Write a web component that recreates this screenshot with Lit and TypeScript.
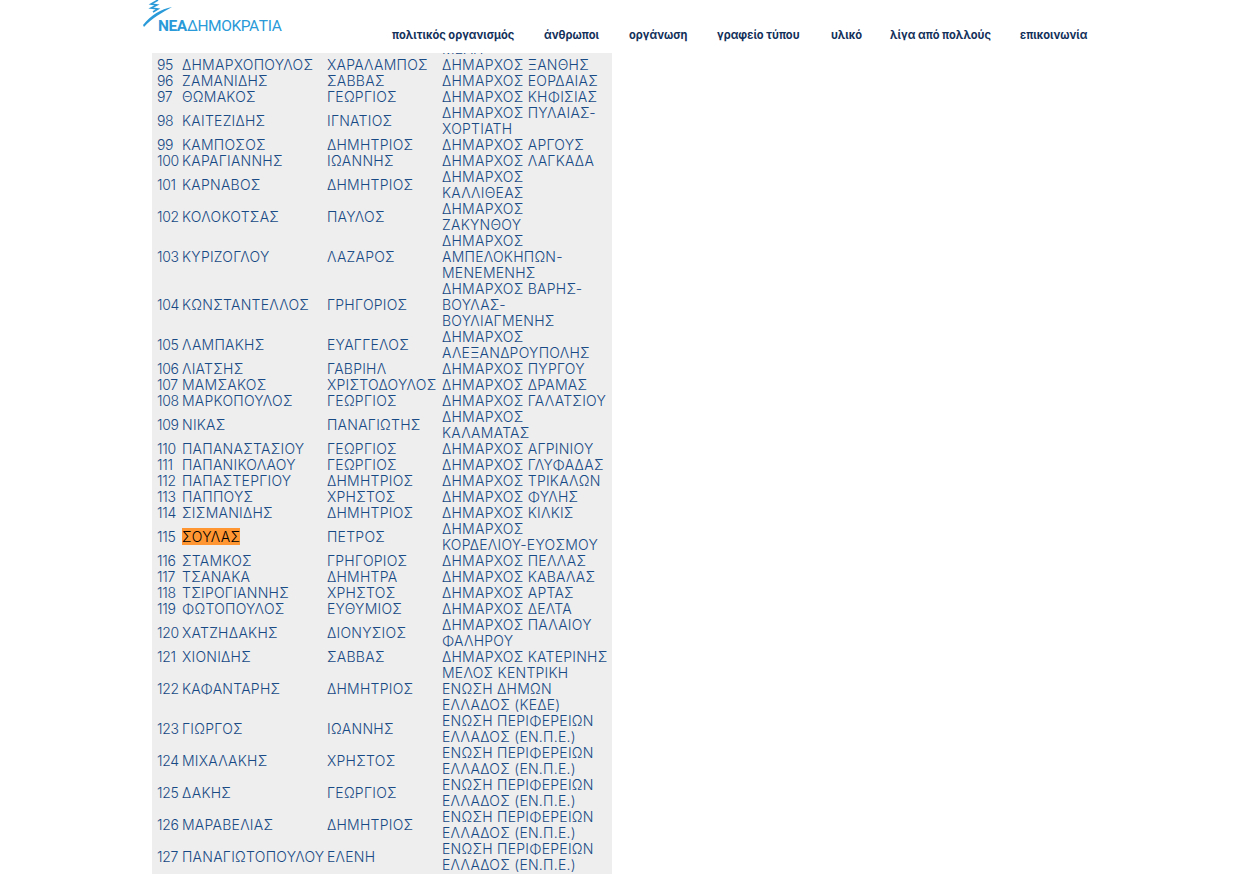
import { LitElement, html, css, svg } from "lit";
import { customElement } from "lit/decorators.js";

const rows: [string, string, string, string][] = [
  ["", "", "", "ΜΕΛΗ"],
  ["95", "ΔΗΜΑΡΧΟΠΟΥΛΟΣ", "ΧΑΡΑΛΑΜΠΟΣ", "ΔΗΜΑΡΧΟΣ ΞΑΝΘΗΣ"],
  ["96", "ΖΑΜΑΝΙΔΗΣ", "ΣΑΒΒΑΣ", "ΔΗΜΑΡΧΟΣ ΕΟΡΔΑΙΑΣ"],
  ["97", "ΘΩΜΑΚΟΣ", "ΓΕΩΡΓΙΟΣ", "ΔΗΜΑΡΧΟΣ ΚΗΦΙΣΙΑΣ"],
  ["98", "ΚΑΙΤΕΖΙΔΗΣ", "ΙΓΝΑΤΙΟΣ", "ΔΗΜΑΡΧΟΣ ΠΥΛΑΙΑΣ-\nΧΟΡΤΙΑΤΗ"],
  ["99", "ΚΑΜΠΟΣΟΣ", "ΔΗΜΗΤΡΙΟΣ", "ΔΗΜΑΡΧΟΣ ΑΡΓΟΥΣ"],
  ["100", "ΚΑΡΑΓΙΑΝΝΗΣ", "ΙΩΑΝΝΗΣ", "ΔΗΜΑΡΧΟΣ ΛΑΓΚΑΔΑ"],
  ["101", "ΚΑΡΝΑΒΟΣ", "ΔΗΜΗΤΡΙΟΣ", "ΔΗΜΑΡΧΟΣ\nΚΑΛΛΙΘΕΑΣ"],
  ["102", "ΚΟΛΟΚΟΤΣΑΣ", "ΠΑΥΛΟΣ", "ΔΗΜΑΡΧΟΣ\nΖΑΚΥΝΘΟΥ"],
  ["103", "ΚΥΡΙΖΟΓΛΟΥ", "ΛΑΖΑΡΟΣ", "ΔΗΜΑΡΧΟΣ\nΑΜΠΕΛΟΚΗΠΩΝ-\nΜΕΝΕΜΕΝΗΣ"],
  ["104", "ΚΩΝΣΤΑΝΤΕΛΛΟΣ", "ΓΡΗΓΟΡΙΟΣ", "ΔΗΜΑΡΧΟΣ ΒΑΡΗΣ-\nΒΟΥΛΑΣ-\nΒΟΥΛΙΑΓΜΕΝΗΣ"],
  ["105", "ΛΑΜΠΑΚΗΣ", "ΕΥΑΓΓΕΛΟΣ", "ΔΗΜΑΡΧΟΣ\nΑΛΕΞΑΝΔΡΟΥΠΟΛΗΣ"],
  ["106", "ΛΙΑΤΣΗΣ", "ΓΑΒΡΙΗΛ", "ΔΗΜΑΡΧΟΣ ΠΥΡΓΟΥ"],
  ["107", "ΜΑΜΣΑΚΟΣ", "ΧΡΙΣΤΟΔΟΥΛΟΣ", "ΔΗΜΑΡΧΟΣ ΔΡΑΜΑΣ"],
  ["108", "ΜΑΡΚΟΠΟΥΛΟΣ", "ΓΕΩΡΓΙΟΣ", "ΔΗΜΑΡΧΟΣ ΓΑΛΑΤΣΙΟΥ"],
  ["109", "ΝΙΚΑΣ", "ΠΑΝΑΓΙΩΤΗΣ", "ΔΗΜΑΡΧΟΣ\nΚΑΛΑΜΑΤΑΣ"],
  ["110", "ΠΑΠΑΝΑΣΤΑΣΙΟΥ", "ΓΕΩΡΓΙΟΣ", "ΔΗΜΑΡΧΟΣ ΑΓΡΙΝΙΟΥ"],
  ["111", "ΠΑΠΑΝΙΚΟΛΑΟΥ", "ΓΕΩΡΓΙΟΣ", "ΔΗΜΑΡΧΟΣ ΓΛΥΦΑΔΑΣ"],
  ["112", "ΠΑΠΑΣΤΕΡΓΙΟΥ", "ΔΗΜΗΤΡΙΟΣ", "ΔΗΜΑΡΧΟΣ ΤΡΙΚΑΛΩΝ"],
  ["113", "ΠΑΠΠΟΥΣ", "ΧΡΗΣΤΟΣ", "ΔΗΜΑΡΧΟΣ ΦΥΛΗΣ"],
  ["114", "ΣΙΣΜΑΝΙΔΗΣ", "ΔΗΜΗΤΡΙΟΣ", "ΔΗΜΑΡΧΟΣ ΚΙΛΚΙΣ"],
  ["115", "ΣΟΥΛΑΣ", "ΠΕΤΡΟΣ", "ΔΗΜΑΡΧΟΣ\nΚΟΡΔΕΛΙΟΥ-ΕΥΟΣΜΟΥ"],
  ["116", "ΣΤΑΜΚΟΣ", "ΓΡΗΓΟΡΙΟΣ", "ΔΗΜΑΡΧΟΣ ΠΕΛΛΑΣ"],
  ["117", "ΤΣΑΝΑΚΑ", "ΔΗΜΗΤΡΑ", "ΔΗΜΑΡΧΟΣ ΚΑΒΑΛΑΣ"],
  ["118", "ΤΣΙΡΟΓΙΑΝΝΗΣ", "ΧΡΗΣΤΟΣ", "ΔΗΜΑΡΧΟΣ ΑΡΤΑΣ"],
  ["119", "ΦΩΤΟΠΟΥΛΟΣ", "ΕΥΘΥΜΙΟΣ", "ΔΗΜΑΡΧΟΣ ΔΕΛΤΑ"],
  ["120", "ΧΑΤΖΗΔΑΚΗΣ", "ΔΙΟΝΥΣΙΟΣ", "ΔΗΜΑΡΧΟΣ ΠΑΛΑΙΟΥ\nΦΑΛΗΡΟΥ"],
  ["121", "ΧΙΟΝΙΔΗΣ", "ΣΑΒΒΑΣ", "ΔΗΜΑΡΧΟΣ ΚΑΤΕΡΙΝΗΣ"],
  ["122", "ΚΑΦΑΝΤΑΡΗΣ", "ΔΗΜΗΤΡΙΟΣ", "ΜΕΛΟΣ ΚΕΝΤΡΙΚΗ\nΕΝΩΣΗ ΔΗΜΩΝ\nΕΛΛΑΔΟΣ (ΚΕΔΕ)"],
  ["123", "ΓΙΩΡΓΟΣ", "ΙΩΑΝΝΗΣ", "ΕΝΩΣΗ ΠΕΡΙΦΕΡΕΙΩΝ\nΕΛΛΑΔΟΣ (ΕΝ.Π.Ε.)"],
  ["124", "ΜΙΧΑΛΑΚΗΣ", "ΧΡΗΣΤΟΣ", "ΕΝΩΣΗ ΠΕΡΙΦΕΡΕΙΩΝ\nΕΛΛΑΔΟΣ (ΕΝ.Π.Ε.)"],
  ["125", "ΔΑΚΗΣ", "ΓΕΩΡΓΙΟΣ", "ΕΝΩΣΗ ΠΕΡΙΦΕΡΕΙΩΝ\nΕΛΛΑΔΟΣ (ΕΝ.Π.Ε.)"],
  ["126", "ΜΑΡΑΒΕΛΙΑΣ", "ΔΗΜΗΤΡΙΟΣ", "ΕΝΩΣΗ ΠΕΡΙΦΕΡΕΙΩΝ\nΕΛΛΑΔΟΣ (ΕΝ.Π.Ε.)"],
  ["127", "ΠΑΝΑΓΙΩΤΟΠΟΥΛΟΥ", "ΕΛΕΝΗ", "ΕΝΩΣΗ ΠΕΡΙΦΕΡΕΙΩΝ\nΕΛΛΑΔΟΣ (ΕΝ.Π.Ε.)"],
];

const nav = ["πολιτικός οργανισμός", "άνθρωποι", "οργάνωση", "γραφείο τύπου", "υλικό", "λίγα από πολλούς", "επικοινωνία"];

@customElement("app-root")
export class AppRoot extends LitElement {
  static styles = css`
    :host { display: block; position: relative; height: 874px; overflow: hidden; background: #fff; font-family: "Inter", "Noto Sans", sans-serif; }
    header { position: absolute; left: 0; right: 0; top: 0; height: 53px; display: flex; align-items: flex-start; padding-left: 142px; background: #fff; }
    .logo { width: 140px; height: 35px; display: flex; align-items: flex-end; position: relative; }
    .mark { position: absolute; left: 0; top: 0; }
    .word { margin-left: 16px; font-family: "Roboto", sans-serif; font-size: 15.5px; letter-spacing: -0.4px; line-height: 18px; color: #2a9ad8; white-space: nowrap; }
    .word b { font-weight: 700; }
    nav { display: grid; grid-template-columns: 123px 56px 59px 85px 30px 101px 66px; column-gap: 29px; margin-left: 110px; padding-top: 27px; }
    nav a { font-size: 11.1px; line-height: 16px; font-weight: 700; color: #12305a; white-space: nowrap; }
    main { position: absolute; left: 152px; top: 41px; bottom: 0; width: 460px; background: #eee; }
    table { border-collapse: collapse; table-layout: fixed; width: 460px; font-size: 14px; line-height: 16px; font-weight: 350; letter-spacing: 0.25px; color: #174a85; }
    td { padding: 0; vertical-align: middle; white-space: pre-line; }
    .n { width: 25px; padding-left: 5px; letter-spacing: -0.3px; }
    .s { width: 145px; white-space: nowrap; }
    .f { width: 115px; white-space: nowrap; }
    mark { background: #ff9632; color: #000; }
  `;

  render() {
    return html`
      <main>
        <table>
          ${rows.map((r) => html`<tr>
            <td class="n">${r[0]}</td>
            <td class="s">${r[1] === "ΣΟΥΛΑΣ" ? html`<mark>${r[1]}</mark>` : r[1]}</td>
            <td class="f">${r[2]}</td>
            <td>${r[3]}</td>
          </tr>`)}
        </table>
      </main>
      <header>
        <div class="logo">
          <svg class="mark" width="40" height="28" viewBox="0 0 40 28" fill="none">
            ${svg`<path d="M1 25 C9 15 19 9 30 7 C21 12 10 18 2 27Z" fill="#2a9ad8"/>
            <path d="M16 0 L9 4 L15 5 L9 8 L16 9 L11 12" stroke="#2a9ad8" stroke-width="1.6"/>`}
          </svg>
          <div class="word"><b>ΝΕΑ</b>ΔΗΜΟΚΡΑΤΙΑ</div>
        </div>
        <nav>${nav.map((n) => html`<a>${n}</a>`)}</nav>
      </header>
    `;
  }
}
